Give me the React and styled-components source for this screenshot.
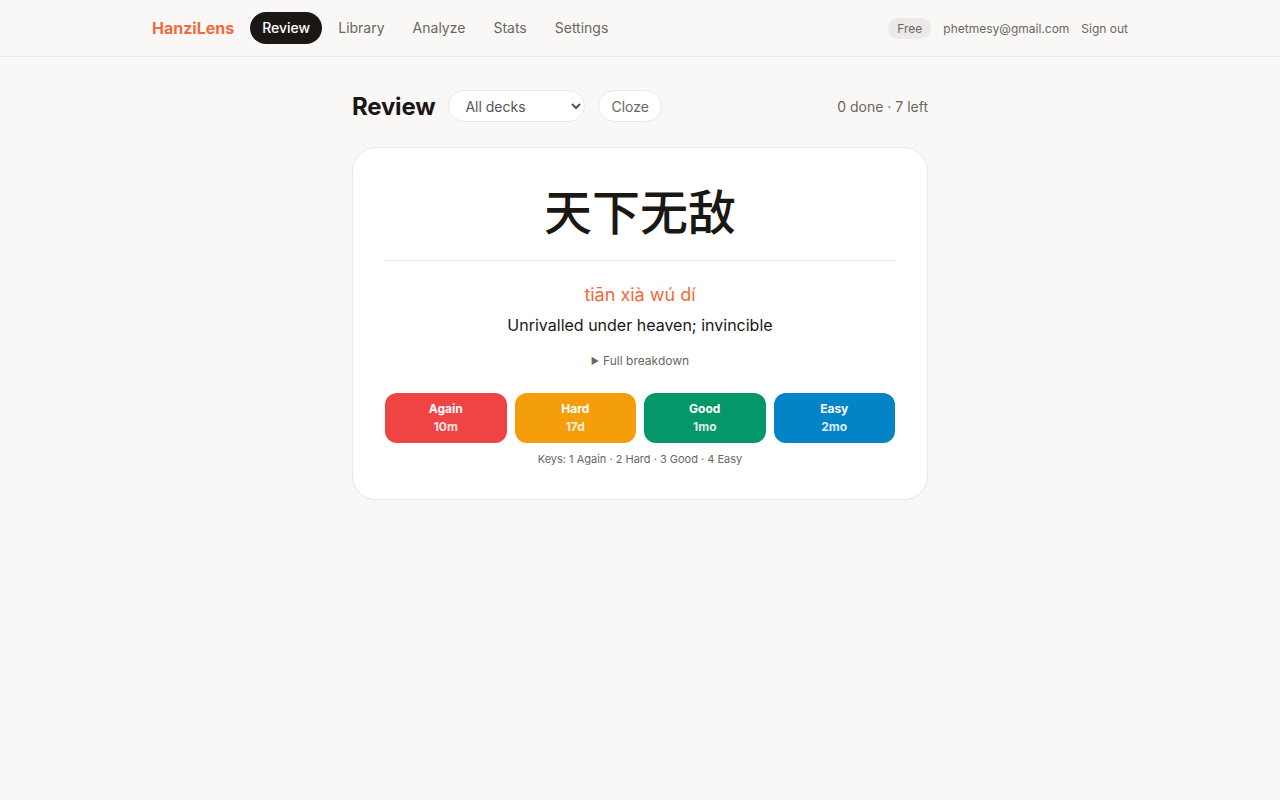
import styled, { createGlobalStyle } from "styled-components";

const Global = createGlobalStyle`
  * { box-sizing: border-box; }
  body {
    margin: 0;
    background: #f9f8f6;
    font-family: Inter, "Noto Sans CJK SC", sans-serif;
    color: #1a1715;
  }
`;

const Header = styled.header`
  height: 57px;
  border-bottom: 1px solid #ebe9e6;
`;

const HeaderInner = styled.div`
  max-width: 976px;
  margin: 0 auto;
  height: 100%;
  display: flex;
  align-items: center;
  justify-content: space-between;
`;

const Left = styled.div`
  display: flex;
  align-items: center;
`;

const Logo = styled.span`
  color: #f26a3d;
  font-weight: 700;
  font-size: 16px;
  margin-right: 16px;
`;

const NavItem = styled.a`
  font-size: 14px;
  line-height: 18px;
  padding: 7px 12px;
  border-radius: 999px;
  margin-right: 4px;
  color: ${(p) => (p.active ? "#fff" : "#6b6661")};
  background: ${(p) => (p.active ? "#1a1715" : "transparent")};
  font-weight: ${(p) => (p.active ? 500 : 400)};
  text-decoration: none;
`;

const Right = styled.div`
  display: flex;
  align-items: center;
  gap: 12px;
  font-size: 12px;
  color: #6b6661;
`;

const Badge = styled.span`
  background: #ebeae8;
  border-radius: 999px;
  padding: 3px 9px;
  font-size: 12px;
`;

const Main = styled.main`
  width: 576px;
  margin: 0 auto;
  padding-top: 33px;
`;

const TitleRow = styled.div`
  display: flex;
  align-items: center;
  height: 32px;
  margin-bottom: 25px;
`;

const Title = styled.h1`
  font-size: 24px;
  font-weight: 700;
  margin: 0 13px 0 0;
  letter-spacing: -0.2px;
`;

const Select = styled.select`
  width: 137px;
  height: 32px;
  border-radius: 999px;
  border: 1px solid #ebe9e6;
  background: #fff;
  font-family: inherit;
  font-size: 14px;
  color: #555;
  padding: 0 10px 0 12px;
  margin-right: 13px;
`;

const Pill = styled.button`
  height: 32px;
  border-radius: 999px;
  border: 1px solid #ebe9e6;
  background: #fff;
  font-family: inherit;
  font-size: 14px;
  color: #6b6661;
  padding: 0 12px;
`;

const Progress = styled.span`
  margin-left: auto;
  font-size: 14px;
  color: #6b6661;
`;

const Card = styled.section`
  background: #fff;
  border: 1px solid #ebe9e6;
  border-radius: 24px;
  padding: 26px 32px 33px;
  text-align: center;
  box-shadow: 0 1px 2px rgba(0, 0, 0, 0.03);
`;

const Hanzi = styled.div`
  font-family: "Noto Sans CJK SC", sans-serif;
  font-size: 48px;
  font-weight: 500;
  line-height: 70px;
  padding-bottom: 16px;
  border-bottom: 1px solid #ebe9e6;
`;

const Pinyin = styled.div`
  color: #f26a3d;
  font-size: 18px;
  margin-top: 22px;
  line-height: 24px;
`;

const Meaning = styled.div`
  font-size: 16px;
  margin-top: 7px;
  line-height: 22px;
`;

const Breakdown = styled.div`
  font-size: 12px;
  color: #6b6661;
  margin-top: 17px;
  line-height: 16px;
`;

const Marker = styled.span`
  font-size: 9px;
  margin-right: 4px;
  vertical-align: 1px;
`;

const Grades = styled.div`
  display: grid;
  grid-template-columns: repeat(4, 1fr);
  gap: 8px;
  margin-top: 24px;
`;

const Grade = styled.button`
  height: 50px;
  border: none;
  border-radius: 12px;
  background: ${(p) => p.color};
  color: #fff;
  font-family: inherit;
  font-size: 12px;
  font-weight: 700;
  line-height: 18px;
  display: flex;
  flex-direction: column;
  align-items: center;
  justify-content: center;
`;

const Interval = styled.span`
  opacity: 0.85;
`;

const Keys = styled.div`
  font-size: 11px;
  color: #6b6661;
  margin-top: 9px;
`;

const grades = [
  ["Again", "10m", "#ef4444"],
  ["Hard", "17d", "#f59e0b"],
  ["Good", "1mo", "#059669"],
  ["Easy", "2mo", "#0284c7"],
];

export default function App() {
  return (
    <>
      <Global />
      <Header>
        <HeaderInner>
          <Left>
            <Logo>HanziLens</Logo>
            <NavItem active>Review</NavItem>
            <NavItem>Library</NavItem>
            <NavItem>Analyze</NavItem>
            <NavItem>Stats</NavItem>
            <NavItem>Settings</NavItem>
          </Left>
          <Right>
            <Badge>Free</Badge>
            <span>phetmesy@gmail.com</span>
            <span>Sign out</span>
          </Right>
        </HeaderInner>
      </Header>
      <Main>
        <TitleRow>
          <Title>Review</Title>
          <Select defaultValue="all">
            <option value="all">All decks</option>
          </Select>
          <Pill>Cloze</Pill>
          <Progress>0 done · 7 left</Progress>
        </TitleRow>
        <Card>
          <Hanzi>天下无敌</Hanzi>
          <Pinyin>tiān xià wú dí</Pinyin>
          <Meaning>Unrivalled under heaven; invincible</Meaning>
          <Breakdown>
            <Marker>▶</Marker>Full breakdown
          </Breakdown>
          <Grades>
            {grades.map(([label, iv, c]) => (
              <Grade key={label} color={c}>
                <span>{label}</span>
                <Interval>{iv}</Interval>
              </Grade>
            ))}
          </Grades>
          <Keys>Keys: 1 Again · 2 Hard · 3 Good · 4 Easy</Keys>
        </Card>
      </Main>
    </>
  );
}
